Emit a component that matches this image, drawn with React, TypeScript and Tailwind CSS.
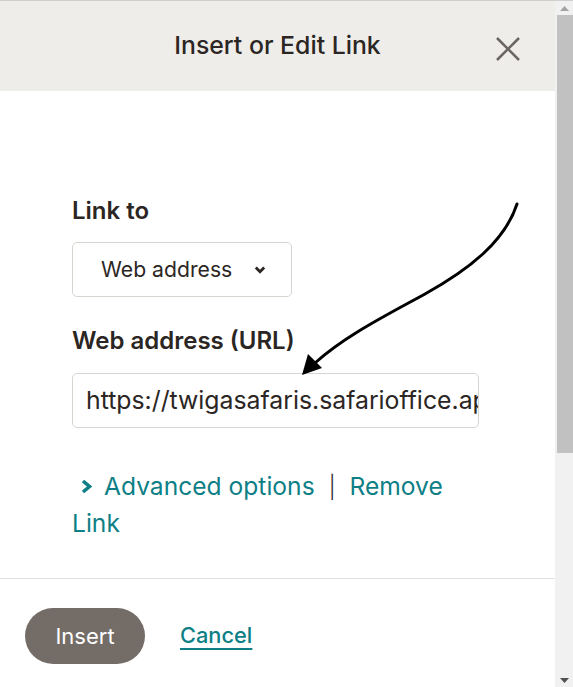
import React from 'react';

const FONT = { fontFamily: 'Inter, "Liberation Sans", sans-serif' };

const Scrollbar: React.FC = () => (
  <div className="flex w-[18px] shrink-0 flex-col bg-[#f1f1f1]">
    <div className="flex h-[14px] items-center justify-center">
      <svg width="9" height="5" viewBox="0 0 9 5">
        <polygon points="0,5 4.5,0 9,5" fill="#a3a3a3" />
      </svg>
    </div>
    <div className="ml-[2px] h-[438px] bg-[#c1c1c1]" />
    <div className="flex-1" />
    <div className="flex h-[14px] items-center justify-center">
      <svg width="9" height="5" viewBox="0 0 9 5">
        <polygon points="0,0 9,0 4.5,5" fill="#505050" />
      </svg>
    </div>
  </div>
);

export default function App() {
  return (
    <div
      className="relative flex h-[687px] w-[573px] overflow-hidden border-t border-[#cfcfcf] bg-white text-[#2b2623]"
      style={FONT}
    >
      <div className="flex flex-1 flex-col">
        <header className="relative flex h-[90px] items-center justify-center bg-[#efede9]">
          <h2 className="text-[24.8px] font-medium text-[#2b2623]">Insert or Edit Link</h2>
          <button className="absolute right-[34px] top-[35px] text-[#6b6663]" aria-label="Close">
            <svg width="26" height="26" viewBox="0 0 26 26">
              <path d="M2 2 L24 24 M24 2 L2 24" stroke="currentColor" strokeWidth="2.6" />
            </svg>
          </button>
        </header>

        <div className="flex flex-1 flex-col pl-[72px] pr-[76px] pt-[105px]">
          <label className="text-[24px] font-semibold leading-[30px]">Link to</label>
          <div className="mt-[16px] flex h-[55px] w-[220px] items-center justify-between rounded-[5px] border border-[#d8d5d1] pl-[28px] pr-[25px] text-[21.2px]">
            <span>Web address</span>
            <svg width="12" height="8" viewBox="0 0 12 8">
              <path d="M1.8 1.5 L6 5.7 L10.2 1.5" fill="none" stroke="#2b2623" strokeWidth="2.8" />
            </svg>
          </div>

          <label className="mt-[29px] text-[24px] font-semibold leading-[30px]">Web address (URL)</label>
          <div className="mt-[17px] flex h-[55px] w-[407px] items-center overflow-hidden rounded-[5px] border border-[#d8d5d1] pl-[13px] pr-[12px]">
            <span className="whitespace-nowrap text-[24.8px]">https://twigasafaris.safarioffice.app</span>
          </div>

          <p className="mt-[40px] w-[406px] text-[24.6px] leading-[36px] text-[#0e7f86]">
            <a className="ml-[8px]">
              <svg width="13" height="15" viewBox="0 0 13 15" className="mr-[11px] inline align-[1px]">
                <path d="M3 2 L9.5 7.5 L3 13" fill="none" stroke="#0e7f86" strokeWidth="3.6" />
              </svg>
              Advanced options
            </a>
            <span className="mx-[14px] text-[22px] font-light text-[#2b2623]">|</span>
            <a>Remove Link</a>
          </p>
        </div>

        <div className="flex h-[109px] items-start gap-[35px] border-t border-[#e3e1de] pl-[25px] pt-[29px]">
          <button className="h-[56px] w-[120px] rounded-full bg-[#736c67] text-[22px] text-white">Insert</button>
          <a className="mt-[12px] text-[21.8px] font-medium leading-[30px] text-[#0e7f86] underline decoration-[1.5px] underline-offset-[5px]">
            Cancel
          </a>
        </div>
      </div>

      <Scrollbar />

      <svg className="pointer-events-none absolute left-0 top-0" width="573" height="687" viewBox="0 0 573 687">
        <path
          d="M517 203 C 505 240, 470 268, 425 293 C 385 315, 345 335, 315 362"
          fill="none"
          stroke="#000"
          strokeWidth="3"
          strokeLinecap="round"
        />
        <polygon points="302,374 308,353 322,367" fill="#000" />
      </svg>
    </div>
  );
}
